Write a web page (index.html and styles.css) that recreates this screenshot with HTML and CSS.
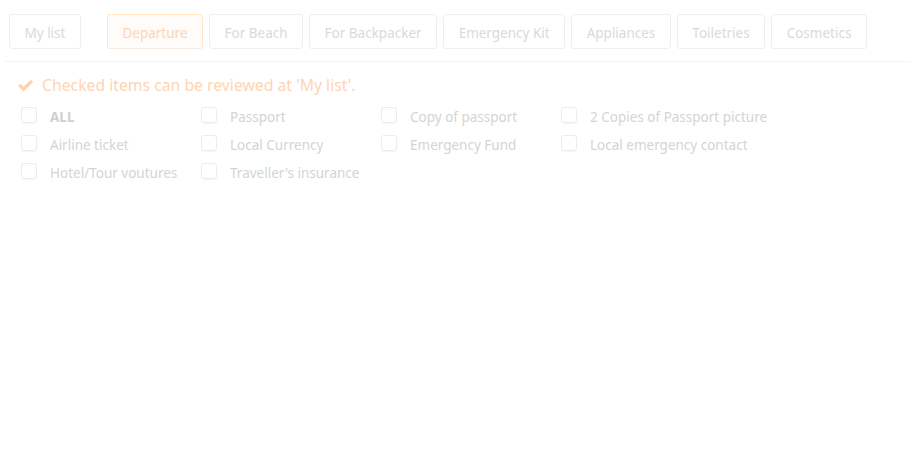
FILE: index.html
```html
<!DOCTYPE html>
<html>
<head>
<meta charset="utf-8">
<link rel="stylesheet" href="styles.css">
</head>
<body>
<div class="page">
  <nav class="tabs">
    <button class="tab mylist">My list</button>
    <button class="tab active">Departure</button>
    <button class="tab">For Beach</button>
    <button class="tab">For Backpacker</button>
    <button class="tab">Emergency Kit</button>
    <button class="tab">Appliances</button>
    <button class="tab">Toiletries</button>
    <button class="tab">Cosmetics</button>
  </nav>
  <div class="notice">
    <svg class="check" viewBox="0 0 16 14" width="17" height="15"><path d="M1 7.5 L3.2 5.3 L6.2 8.2 L13 1.5 L15.2 3.7 L6.2 12.6 Z" fill="#fdd3b0"/></svg>
    <span>Checked items can be reviewed at 'My list'.</span>
  </div>
  <div class="items">
    <label class="item"><span class="box"></span><span class="lbl bold">ALL</span></label>
    <label class="item"><span class="box"></span><span class="lbl">Passport</span></label>
    <label class="item"><span class="box"></span><span class="lbl">Copy of passport</span></label>
    <label class="item"><span class="box"></span><span class="lbl">2 Copies of Passport picture</span></label>
    <label class="item"><span class="box"></span><span class="lbl">Airline ticket</span></label>
    <label class="item"><span class="box"></span><span class="lbl">Local Currency</span></label>
    <label class="item"><span class="box"></span><span class="lbl">Emergency Fund</span></label>
    <label class="item"><span class="box"></span><span class="lbl">Local emergency contact</span></label>
    <label class="item"><span class="box"></span><span class="lbl">Hotel/Tour voutures</span></label>
    <label class="item"><span class="box"></span><span class="lbl">Traveller's insurance</span></label>
  </div>
</div>
</body>
</html>
```
FILE: styles.css
```css
html, body {
  margin: 0;
  padding: 0;
  background: #ffffff;
}
body {
  font-family: "Noto Sans", "Open Sans", sans-serif;
  font-size: 13.5px;
  color: #d2d2d2;
}
.page {
  padding: 14px 8px 0 5px;
}
.tabs {
  display: flex;
  gap: 6px;
  padding: 0 0 12px 4px;
  border-bottom: 1px solid #f3f3f3;
}
.tab {
  height: 35px;
  padding: 2px 14.5px 0;
  border: 1px solid #efefef;
  border-radius: 3px;
  background: #fff;
  font-family: inherit;
  font-size: 13.5px;
  color: #dadada;
  cursor: pointer;
  white-space: nowrap;
}
.tab.mylist {
  margin-right: 20px;
}
.tab.active {
  border: 1px dotted #fcd4ae;
  background: #fefbf8;
  color: #fdd5b4;
}
.notice {
  display: flex;
  align-items: center;
  gap: 8px;
  margin: 12px 0 0 12px;
  font-size: 15.75px;
  color: #fdd5b4;
  height: 22px;
}
.items {
  display: grid;
  grid-template-columns: repeat(3, 180px) auto;
  margin: 7px 0 0 16px;
}
.item {
  display: flex;
  align-items: center;
  height: 28px;
  white-space: nowrap;
}
.box {
  width: 14px;
  height: 14px;
  border: 1px solid #ececec;
  border-radius: 3px;
  margin-top: -4px;
  box-shadow: 0 1px 1px #f6f6f6;
}
.lbl {
  margin-left: 13px;
  color: #d4d4d4;
}
.lbl.bold {
  font-weight: bold;
  color: #cfcfcf;
}
```
